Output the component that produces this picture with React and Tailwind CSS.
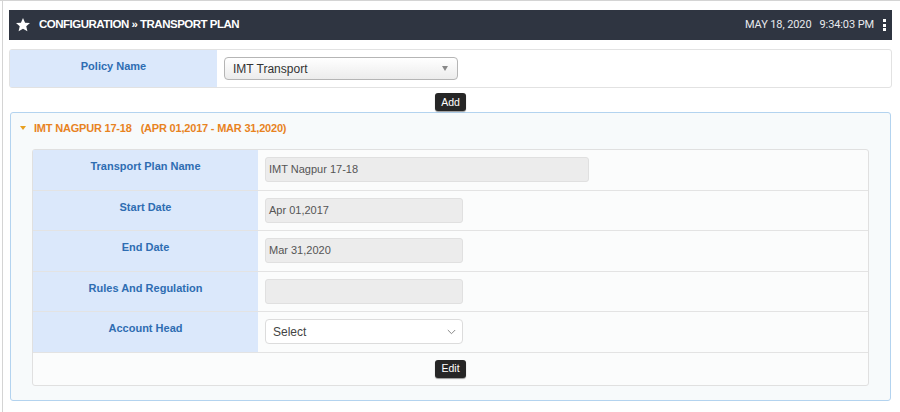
import React from 'react';

const rows = [
  { label: 'Transport Plan Name', value: 'IMT Nagpur 17-18', wide: true },
  { label: 'Start Date', value: 'Apr 01,2017' },
  { label: 'End Date', value: 'Mar 31,2020' },
  { label: 'Rules And Regulation', value: '' },
];

export default function App() {
  return (
    <div className="w-[900px] h-[412px] bg-white border-t border-[#d4d4d4] font-['Liberation_Sans',Arial,sans-serif] overflow-hidden">
      <div className="ml-[2px] h-full border-l border-[#d4d4d4] pl-[6px] pr-[8px] pt-[9px]">
        {/* --- Header bar --- */}
        <div className="h-[30px] bg-[#2f3541] flex items-center pl-[6px] pr-[6px] text-white">
          <svg width="16" height="16" viewBox="0 0 24 24" className="mr-[8px]">
            <path d="M12 1.5l3.1 7 7.4.6-5.6 4.9 1.7 7.4L12 17.5l-6.6 3.9 1.7-7.4L1.5 9.1l7.4-.6z" fill="#fff" />
          </svg>
          <span className="text-[11.5px] font-bold tracking-[-0.5px]">CONFIGURATION » TRANSPORT PLAN</span>
          <span className="ml-auto text-[11px] font-['Roboto',sans-serif] text-[#e8eaee] tracking-[-0.1px]">
            MAY 18, 2020<span className="ml-[8px]">9:34:03 PM</span>
          </span>
          <div className="ml-[9px] flex flex-col gap-[1.5px]">
            <span className="w-[3px] h-[3px] bg-white" />
            <span className="w-[3px] h-[3px] bg-white" />
            <span className="w-[3px] h-[3px] bg-white" />
          </div>
        </div>

        {/* --- Policy row --- */}
        <div className="mt-[9px] h-[39px] flex border border-[#e2e2e2] rounded-[3px] bg-white">
          <div className="w-[207px] bg-[#dbe8fb] text-center pt-[8px] text-[11px] font-bold text-[#2e6db2]">Policy Name</div>
          <div className="pl-[7px] pt-[7px]">
            <div className="w-[234px] h-[23px] rounded-[4px] border border-[#b5b5b5] bg-gradient-to-b from-white to-[#ececec] flex items-center pl-[8px] pr-[9px] text-[12px] text-[#333]">
              IMT Transport
              <span className="ml-auto w-0 h-0 border-l-[3.5px] border-r-[3.5px] border-t-[5px] border-l-transparent border-r-transparent border-t-[#888]" />
            </div>
          </div>
        </div>

        <div className="flex justify-center mt-[5px]">
          <button className="h-[18px] px-[6px] rounded-[3px] bg-[#262626] text-white text-[10.5px] leading-none shadow-[0_1px_1px_rgba(0,0,0,0.4)]">Add</button>
        </div>

        {/* --- Plan panel --- */}
        <div className="mt-[1px] ml-[1px] mr-[1px] h-[289px] border border-[#b3d3ef] rounded-[3px] bg-[#f7fafb]">
          <div className="h-[30px] flex items-center pl-[9px] text-[11px] font-bold text-[#e8831f] tracking-[-0.2px]">
            <span className="w-0 h-0 border-l-[3.5px] border-r-[3.5px] border-t-[4px] border-l-transparent border-r-transparent border-t-[#e8a01f] mr-[8px]" />
            IMT NAGPUR 17-18<span className="ml-[9px]">(APR 01,2017 - MAR 31,2020)</span>
          </div>

          <div className="mt-[6px] mx-[21px] border border-[#e0e0e0] rounded-[3px] bg-[#fbfcfc]">
            {rows.map(r => (
              <div key={r.label} className="flex h-[40.5px] border-b border-[#e3e3e3]">
                <div className="w-[225px] bg-[#dbe8fb] text-center pt-[8px] text-[11px] font-bold text-[#2e6db2]">{r.label}</div>
                <div className="pl-[7px] pt-[7px]">
                  <div className={`${r.wide ? 'w-[324px]' : 'w-[198px]'} h-[25px] rounded-[3px] border border-[#e0e0e0] bg-[#ececec] flex items-center pl-[3px] text-[11px] text-[#555]`}>
                    {r.value}
                  </div>
                </div>
              </div>
            ))}
            <div className="flex h-[40.5px] border-b border-[#e3e3e3]">
              <div className="w-[225px] bg-[#dbe8fb] text-center pt-[8px] text-[11px] font-bold text-[#2e6db2]">Account Head</div>
              <div className="pl-[7px] pt-[7px]">
                <div className="w-[198px] h-[25px] rounded-[4px] border border-[#dcdcdc] bg-white flex items-center pl-[7px] pr-[6px] text-[12px] text-[#444]">
                  Select
                  <svg width="9" height="6" viewBox="0 0 9 6" className="ml-auto">
                    <path d="M0.8 1l3.7 3.7L8.2 1" fill="none" stroke="#888" strokeWidth="1" />
                  </svg>
                </div>
              </div>
            </div>
            <div className="h-[32px] flex justify-center items-center">
              <button className="h-[18px] px-[6px] rounded-[3px] bg-[#262626] text-white text-[10.5px] leading-none shadow-[0_1px_1px_rgba(0,0,0,0.4)]">Edit</button>
            </div>
          </div>
        </div>
      </div>
    </div>
  );
}
